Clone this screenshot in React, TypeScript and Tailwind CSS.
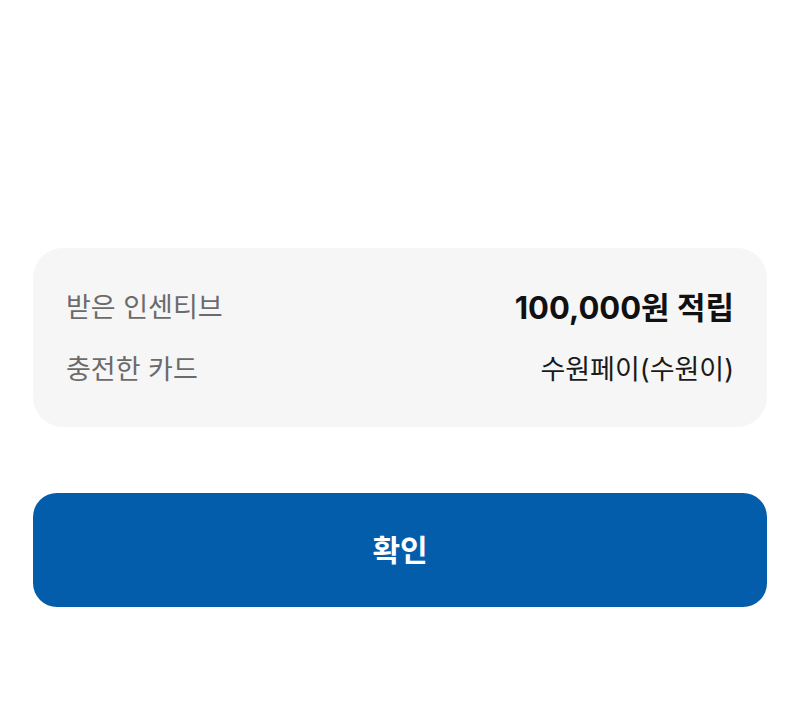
export default function App() {
  const rows = [
    { label: '받은 인센티브', value: '100,000원 적립', bold: true },
    { label: '충전한 카드', value: '수원페이(수원이)', bold: false },
  ]

  return (
    <div
      className="min-h-[709px] bg-white px-[33px] pt-[248px]"
      style={{ fontFamily: 'Inter, "Noto Sans CJK KR", "Noto Sans", sans-serif' }}
    >
      {/* Summary card */}
      <div className="rounded-[30px] bg-[#f6f6f6] px-[33px] pt-[40px] pb-[37px] flex flex-col gap-[22px]">
        {rows.map((r) => (
          <div key={r.label} className="flex items-center justify-between h-[40px]">
            <span className="text-[27px] text-[#6b6b6b]">{r.label}</span>
            <span
              className={
                r.bold
                  ? 'text-[31px] font-bold text-[#111]'
                  : 'text-[27px] text-[#1a1a1a]'
              }
            >
              {r.value}
            </span>
          </div>
        ))}
      </div>

      <button className="mt-[66px] w-full h-[114px] rounded-[24px] bg-[#045dab] text-white text-[30px] font-bold">
        확인
      </button>
    </div>
  )
}
